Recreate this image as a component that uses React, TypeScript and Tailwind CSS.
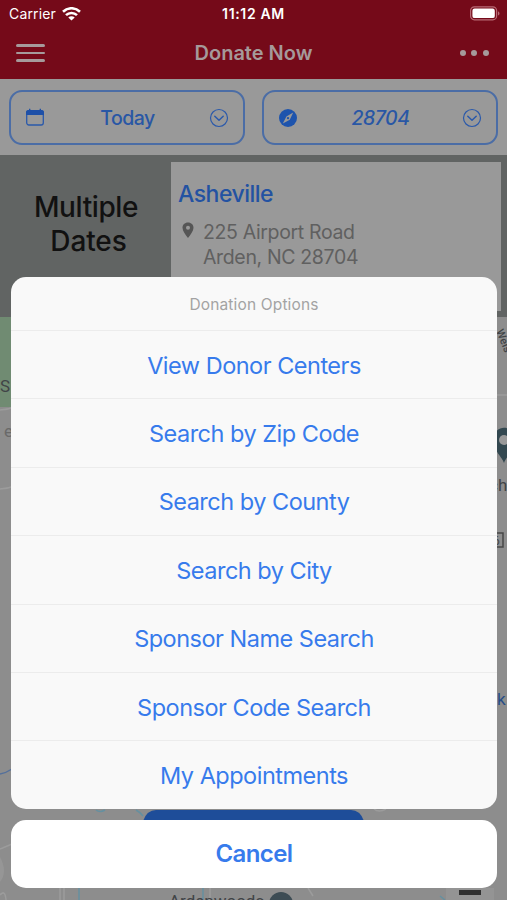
import type { ReactNode } from "react";

const OPTIONS = [
  "View Donor Centers",
  "Search by Zip Code",
  "Search by County",
  "Search by City",
  "Sponsor Name Search",
  "Sponsor Code Search",
  "My Appointments",
];

function WifiIcon() {
  return (
    <svg width="19" height="14" viewBox="0 0 19 14" fill="none" stroke="#fff" strokeWidth="2.6">
      <path d="M1 4.700a12.200 12.200 0 0 1 17 0" />
      <path d="M4 8.200a7.800 7.800 0 0 1 11 0" />
      <path d="M9.500 13.600 6.300 10.500a4.500 4.500 0 0 1 6.400 0Z" fill="#fff" stroke="none" />
    </svg>
  );
}

function BatteryIcon() {
  return (
    <svg width="30" height="15" viewBox="0 0 30 15" fill="none">
      <rect x="0.6" y="0.8" width="26" height="13" rx="3.8" stroke="#b86a75" strokeWidth="1.2" />
      <rect x="2.4" y="2.5" width="22.4" height="9.6" rx="2.2" fill="#fff" />
      <path d="M28 5.2c2 .8 2 3.6 0 4.4Z" fill="#b86a75" />
    </svg>
  );
}

function CalendarIcon() {
  return (
    <svg width="20" height="19" viewBox="0 0 20 19" fill="none">
      <rect x="1.7" y="2.7" width="16.6" height="14.3" rx="2.2" stroke="#2a59ab" strokeWidth="1.3" />
      <path d="M1 7V4.500A2.500 2.500 0 0 1 3.500 2H4V.8h1.400V2h9.200V.8H16V2h.5A2.500 2.500 0 0 1 19 4.500V7Z" fill="#1e50a8" />
    </svg>
  );
}

function CompassIcon() {
  return (
    <svg width="20" height="20" viewBox="0 0 20 20">
      <circle cx="10" cy="10" r="9" fill="#1e54ad" />
      <path d="M15.200 4.400 11.800 11.700 4.800 15.400 8.400 8.400Z" fill="#999" />
      <circle cx="10" cy="10.1" r="1.2" fill="#1e54ad" />
    </svg>
  );
}

function ChevronCircle() {
  return (
    <svg width="20" height="20" viewBox="0 0 20 20" fill="none" stroke="#2a59ab">
      <circle cx="10" cy="10" r="8.5" strokeWidth="1.2" />
      <path d="m5.800 8.300 4.200 4 4.200-4" strokeWidth="1.5" strokeLinecap="round" strokeLinejoin="round" />
    </svg>
  );
}

function FilterButton({ icon, children }: { icon: ReactNode; children: ReactNode }) {
  return (
    <button className="flex h-[55px] w-[236px] items-center justify-between rounded-[13px] border-2 border-[#4b6da6] px-[14px] text-[19.5px] font-medium tracking-[-0.5px] text-[#2957a5]">
      {icon}
      <span className="pt-[3px] pl-px">{children}</span>
      <ChevronCircle />
    </button>
  );
}

function MapBackground() {
  return (
    <svg className="block" width="507" height="583" viewBox="0 317 507 583">
      <rect y="317" width="507" height="583" fill="#8d8d8d" />
      <path d="M0 317h12v90H0Z" fill="#708b72" />
      <g fill="none" stroke="#9c9c9c" strokeWidth="1.5">
        <path d="M0 410q7 0 14-3M0 489q7 0 14-3M497 395h10" />
        <path d="M0 849l12-5M0 895q5-6 6 5M60 888v12M64 888v12M210 888v12M308 888l5 8M374 809q5 4 12 0" />
      </g>
      <path d="M0 774q6-1 12-5" fill="none" stroke="#54709b" strokeWidth="1.5" />
      <path d="M96 810q4 3 9 0M136 810q4 2 7 6M79 888v12M203 888v12M440 896l5 4" fill="none" stroke="#6590a0" strokeWidth="1.5" />
      <path d="M0 857q8 15 0 25Z" fill="#969696" />
      <path d="M143 821q4-11 13-11h195q9 0 13 11Z" fill="#1e4d99" />
      <g className="font-['Roboto',sans-serif]" fill="#414447">
        <text x="0" y="392" fontSize="17">S</text>
        <text x="4" y="437" fontSize="17" fill="#696969">e</text>
        <text x="489" y="491" fontSize="17">ch</text>
        <text x="497" y="705" fontSize="17" fill="#274d87">k</text>
        <text fontSize="11" fontWeight="500" transform="translate(496 331) rotate(68)">Wels</text>
        <text x="169" y="907" fontSize="17">Ardenwoods</text>
        <text x="493" y="545" fontSize="12">6</text>
      </g>
      <path d="M491 533h12v14h-12" fill="none" stroke="#474747" strokeWidth="1.5" />
      <path d="M504 463c-2-7-10-10-10-24 0-15 20-15 20 0 0 14-8 17-10 24Z" fill="#334850" />
      <circle cx="504" cy="440" r="5" fill="#999" />
      <circle cx="281" cy="904" r="12" fill="#3d4c54" />
      <rect x="446" y="888" width="48" height="12" fill="#949494" />
      <rect x="459" y="890" width="22" height="5" fill="#303030" />
    </svg>
  );
}

function ActionSheet() {
  return (
    <div className="absolute right-[10px] left-[11px] top-[277px] flex flex-col gap-[11px] text-center text-[#377bec]">
      <div className="flex flex-col overflow-hidden rounded-[15px] bg-[#f9f9f9]">
        <div className="flex h-[53px] items-center justify-center text-[15.5px] tracking-[0.15px] text-[#a3a3a3]">
          <span className="pt-[3px]">Donation Options</span>
        </div>
        {OPTIONS.map((label) => (
          <button
            key={label}
            className="flex h-[68.4px] w-full items-center justify-center border-t border-[#ececec] pt-px text-[23.5px] tracking-[-0.5px]"
          >
            {label}
          </button>
        ))}
      </div>
      <button className="h-[68px] rounded-[15px] bg-white text-[24px] font-semibold tracking-[-0.6px]">
        Cancel
      </button>
    </div>
  );
}

export default function App() {
  return (
    <div className="relative h-[900px] w-[507px] overflow-hidden bg-[#8d8d8d] font-['Inter',sans-serif]">
      <header className="h-[79px] bg-[#750a19]">
        <div className="grid h-[27px] grid-cols-3 items-center px-[9px] text-[14px] text-white">
          <div className="flex items-center gap-[6px]">
            <span className="tracking-[0.15px]">Carrier</span>
            <WifiIcon />
          </div>
          <span className="text-center font-semibold tracking-[0.65px]">11:12 AM</span>
          <div className="-mr-[2px] flex justify-end">
            <BatteryIcon />
          </div>
        </div>
        <div className="grid h-[52px] grid-cols-3 items-center px-4">
          <div className="flex w-[29px] flex-col gap-[5px]">
            <span className="h-[2.5px] rounded bg-[#a69a9b]" />
            <span className="h-[2.5px] rounded bg-[#a69a9b]" />
            <span className="h-[2.5px] rounded bg-[#a69a9b]" />
          </div>
          <h1 className="text-center text-[20px] font-semibold whitespace-nowrap text-[#a5999a]">Donate Now</h1>
          <div className="flex justify-end gap-[5.5px] pr-[2px]">
            <span className="size-[6px] rounded-full bg-[#a69a9b]" />
            <span className="size-[6px] rounded-full bg-[#a69a9b]" />
            <span className="size-[6px] rounded-full bg-[#a69a9b]" />
          </div>
        </div>
      </header>

      <div className="flex h-[76px] justify-between bg-[#999] px-[9px] pt-[11px]">
        <FilterButton icon={<CalendarIcon />}>Today</FilterButton>
        <FilterButton icon={<CompassIcon />}>
          <em>28704</em>
        </FilterButton>
      </div>

      <section className="flex h-[162px] bg-[#616463] pt-[7px] pr-[6px] pb-[6px]">
        <h2 className="w-[171px] pt-[28px] pl-px text-center text-[28px] leading-[34px] font-medium tracking-[-0.4px] text-[#111]">
          Multiple
          <br />
          <span className="pl-[5px] tracking-[-0.1px]">Dates</span>
        </h2>
        <div className="flex-1 bg-[#999] pt-[17px] pl-[7px]">
          <h3 className="text-[23px] leading-[30px] font-medium tracking-[-0.5px] text-[#2352a2]">Asheville</h3>
          <div className="flex pt-[11px] text-[19.5px] leading-[24.5px] tracking-[-0.35px] text-[#606060]">
            <svg className="mt-[2px] mr-[9px] ml-[4px]" width="12" height="17" viewBox="0 0 12 17" fill="#555">
              <path
                fillRule="evenodd"
                d="M6 .5c-3.300 0-5.500 2.300-5.500 5.200C.5 9 3.400 12.500 6 16c2.600-3.500 5.500-7 5.500-10.300C11.500 2.800 9.300.5 6 .5Zm0 3.300a2 2 0 1 1 0 4 2 2 0 0 1 0-4Z"
              />
            </svg>
            <p>
              225 Airport Road
              <br />
              Arden, NC 28704
            </p>
          </div>
        </div>
      </section>

      <MapBackground />
      <ActionSheet />
    </div>
  );
}
